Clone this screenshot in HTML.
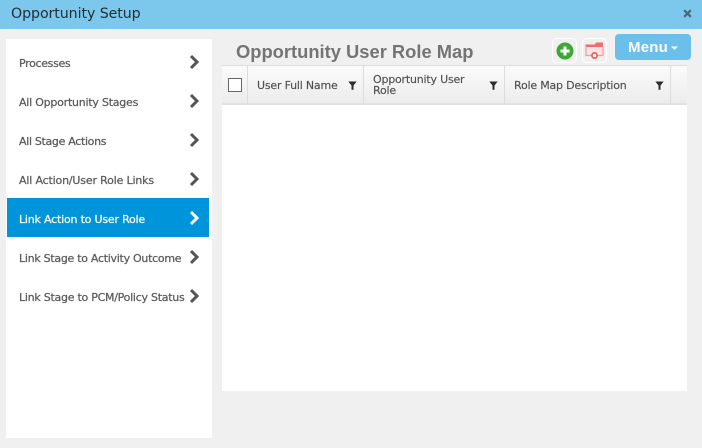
<!DOCTYPE html>
<html><head><meta charset="utf-8">
<style>
html,body{margin:0;padding:0}
body{width:702px;height:448px;overflow:hidden;background:#f0f0f0;position:relative;font-family:"DejaVu Sans","Liberation Sans",sans-serif;color:#555}
.a{position:absolute;white-space:nowrap}
.bar{left:0;top:0;width:702px;height:29px;background:#7cc7ec}
.side{left:6px;top:39px;width:206px;height:399px;background:#fff}
.item{left:19px;font-size:11px;font-weight:400;line-height:14px;color:#5a5a5a;-webkit-text-stroke:.25px #5a5a5a}
.act{left:7px;top:198px;width:202px;height:39px;background:#0095da}
.th{font-size:11px;letter-spacing:-.2px;line-height:11px;color:#505050;-webkit-text-stroke:.15px #505050}
.sep{top:66px;width:1px;height:38px;background:#dcdcdc}
</style></head><body>
<div class="a bar"></div>
<div class="a" style="left:11px;top:4px;font-size:14.2px;line-height:20px;color:#1f2d36;letter-spacing:-.08px">Opportunity Setup</div>
<svg class="a" style="left:683px;top:9px" width="9" height="9" viewBox="0 0 9 9"><path d="M1.200 1.200L7.800 7.800M7.800 1.200L1.200 7.800" stroke="#4f6472" stroke-width="2.200"/></svg>

<div class="a side"></div>
<div class="a act"></div>
<div class="a item" style="top:57px;letter-spacing:-.32px">Processes</div>
<div class="a item" style="top:96px;letter-spacing:-.23px">All Opportunity Stages</div>
<div class="a item" style="top:135px;letter-spacing:-.32px">All Stage Actions</div>
<div class="a item" style="top:174px;letter-spacing:-.17px">All Action/User Role Links</div>
<div class="a item" style="top:213px;letter-spacing:-.2px;color:#fff;-webkit-text-stroke:.25px #fff">Link Action to User Role</div>
<div class="a item" style="top:252px;letter-spacing:-.28px">Link Stage to Activity Outcome</div>
<div class="a item" style="top:291px;letter-spacing:-.26px">Link Stage to PCM/Policy Status</div>
<svg class="a" style="left:188px;top:53.500px" width="14" height="270" viewBox="0 0 14 270" fill="none" stroke="#555" stroke-width="3">
<path d="M3 2L9 8L3 14"/>
<path d="M3 41L9 47L3 53"/>
<path d="M3 80L9 86L3 92"/>
<path d="M3 119L9 125L3 131"/>
<path d="M3 158L9 164L3 170" stroke="#fff"/>
<path d="M3 197L9 203L3 209"/>
<path d="M3 236L9 242L3 248"/>
</svg>

<div class="a" style="left:236px;top:40px;font-family:'Liberation Sans',sans-serif;font-size:18.350px;line-height:24px;font-weight:700;color:#747474;letter-spacing:0">Opportunity User Role Map</div>

<div class="a" style="left:552px;top:38px;width:25px;height:25px;box-sizing:border-box;border:1px solid #fff;border-radius:5px"></div>
<svg class="a" style="left:556px;top:42px" width="18" height="18" viewBox="0 0 18 18"><circle cx="9" cy="9" r="8.500" fill="#3aaa35"/><path d="M9 4.500V13.500M4.500 9H13.500" stroke="#fff" stroke-width="3"/></svg>
<div class="a" style="left:582px;top:38px;width:25px;height:25px;box-sizing:border-box;border:1px solid #fff;border-radius:5px"></div>
<svg class="a" style="left:585px;top:41px" width="19" height="19" viewBox="0 0 19 19" fill="none"><path d="M.5 3.500H10L11 1.500H18V6H.5Z" fill="#f26a6a"/><path d="M2 6H17V14H2Z" fill="#fde3e3"/><path d="M1 5V14.500H6M12.500 14.500H18V5" stroke="#f79a9a" stroke-width="1.300"/><circle cx="9.500" cy="14.500" r="2.600" fill="#fff" stroke="#f05a5a" stroke-width="1.700"/></svg>

<div class="a" style="left:615px;top:34px;width:76px;height:26px;background:#6ac0ea;border-radius:4px"></div>
<div class="a" style="left:628px;top:38px;font-family:'Liberation Sans',sans-serif;font-size:15px;line-height:20px;font-weight:700;color:#fff;letter-spacing:.2px">Menu</div>
<svg class="a" style="left:670px;top:46px" width="9" height="5" viewBox="0 0 9 5"><path d="M1 .5H8L4.500 4Z" fill="#fff"/></svg>

<div class="a" style="left:222px;top:65px;width:465px;height:326px;background:#fff"></div>
<div class="a" style="left:222px;top:65px;width:465px;height:40px;box-sizing:border-box;border-top:1px solid #dedede;border-bottom:2px solid #e2e2e2;background:linear-gradient(#fbfbfb,#ececec)"></div>
<div class="a sep" style="left:247px"></div>
<div class="a sep" style="left:363px"></div>
<div class="a sep" style="left:504px"></div>
<div class="a sep" style="left:670px"></div>
<div class="a" style="left:228px;top:78px;width:14px;height:14px;box-sizing:border-box;border:1px solid #666;background:#fff"></div>
<div class="a th" style="left:257px;top:80px">User Full Name</div>
<div class="a th" style="left:373px;top:74px">Opportunity User<br>Role</div>
<div class="a th" style="left:514px;top:80px">Role Map Description</div>
<svg class="a" style="left:348px;top:81px" width="9" height="9" viewBox="0 0 9 9"><path d="M.3 .5H8.700L5.500 4.500V8.800H3.500V4.500Z" fill="#2b2b2b"/></svg>
<svg class="a" style="left:489px;top:81px" width="9" height="9" viewBox="0 0 9 9"><path d="M.3 .5H8.700L5.500 4.500V8.800H3.500V4.500Z" fill="#2b2b2b"/></svg>
<svg class="a" style="left:655px;top:81px" width="9" height="9" viewBox="0 0 9 9"><path d="M.3 .5H8.700L5.500 4.500V8.800H3.500V4.500Z" fill="#2b2b2b"/></svg>
</body></html>
